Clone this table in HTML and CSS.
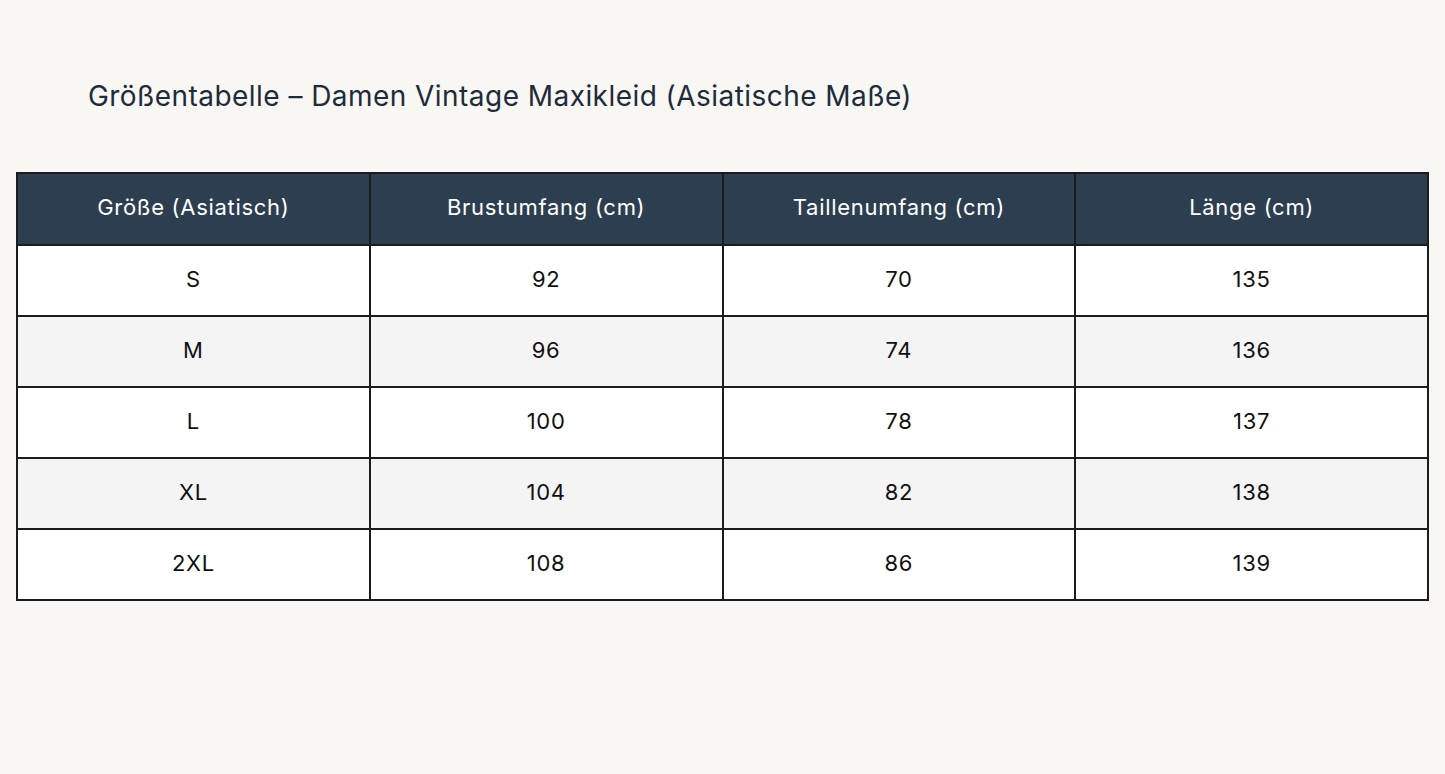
FILE: index.html
```html
<!DOCTYPE html>
<html lang="de">
<head>
<meta charset="utf-8">
<title>Größentabelle</title>
<link rel="stylesheet" href="styles.css">
</head>
<body>
<main class="page">
  <h1 class="title">Größentabelle – Damen Vintage Maxikleid (Asiatische Maße)</h1>
  <table class="size-table">
    <thead>
      <tr><th>Größe (Asiatisch)</th><th>Brustumfang (cm)</th><th>Taillenumfang (cm)</th><th>Länge (cm)</th></tr>
    </thead>
    <tbody>
      <tr><td>S</td><td>92</td><td>70</td><td>135</td></tr>
      <tr><td>M</td><td>96</td><td>74</td><td>136</td></tr>
      <tr><td>L</td><td>100</td><td>78</td><td>137</td></tr>
      <tr><td>XL</td><td>104</td><td>82</td><td>138</td></tr>
      <tr><td>2XL</td><td>108</td><td>86</td><td>139</td></tr>
    </tbody>
  </table>
</main>
</body>
</html>
```

FILE: styles.css
```css
html, body {
  margin: 0;
  padding: 0;
  background: #f8f7f3;
}
.page {
  padding: 76px 16px 0 16px;
  font-family: "Inter", "Open Sans", sans-serif;
}
.title {
  margin: 0 0 0 72px;
  font-size: 28px;
  font-weight: 400;
  line-height: 40px;
  letter-spacing: 0.45px;
  color: #1e2b3c;
}
.size-table {
  margin-top: 56px;
  width: 1413px;
  border-collapse: collapse;
  table-layout: fixed;
  border: 2px solid #1c1c1c;
}
.size-table th,
.size-table td {
  border: 2px solid #1c1c1c;
  text-align: center;
  height: 65px;
  padding: 0 0 4px 0;
  font-size: 22px;
  letter-spacing: 0.7px;
  font-weight: 400;
  color: #111;
}
.size-table th {
  background: #2c3e50;
  color: #fff;
  height: 66px;
}
.size-table tbody tr:nth-child(odd) td {
  background: #ffffff;
}
.size-table tbody tr:nth-child(even) td {
  background: #f4f4f4;
}
```
